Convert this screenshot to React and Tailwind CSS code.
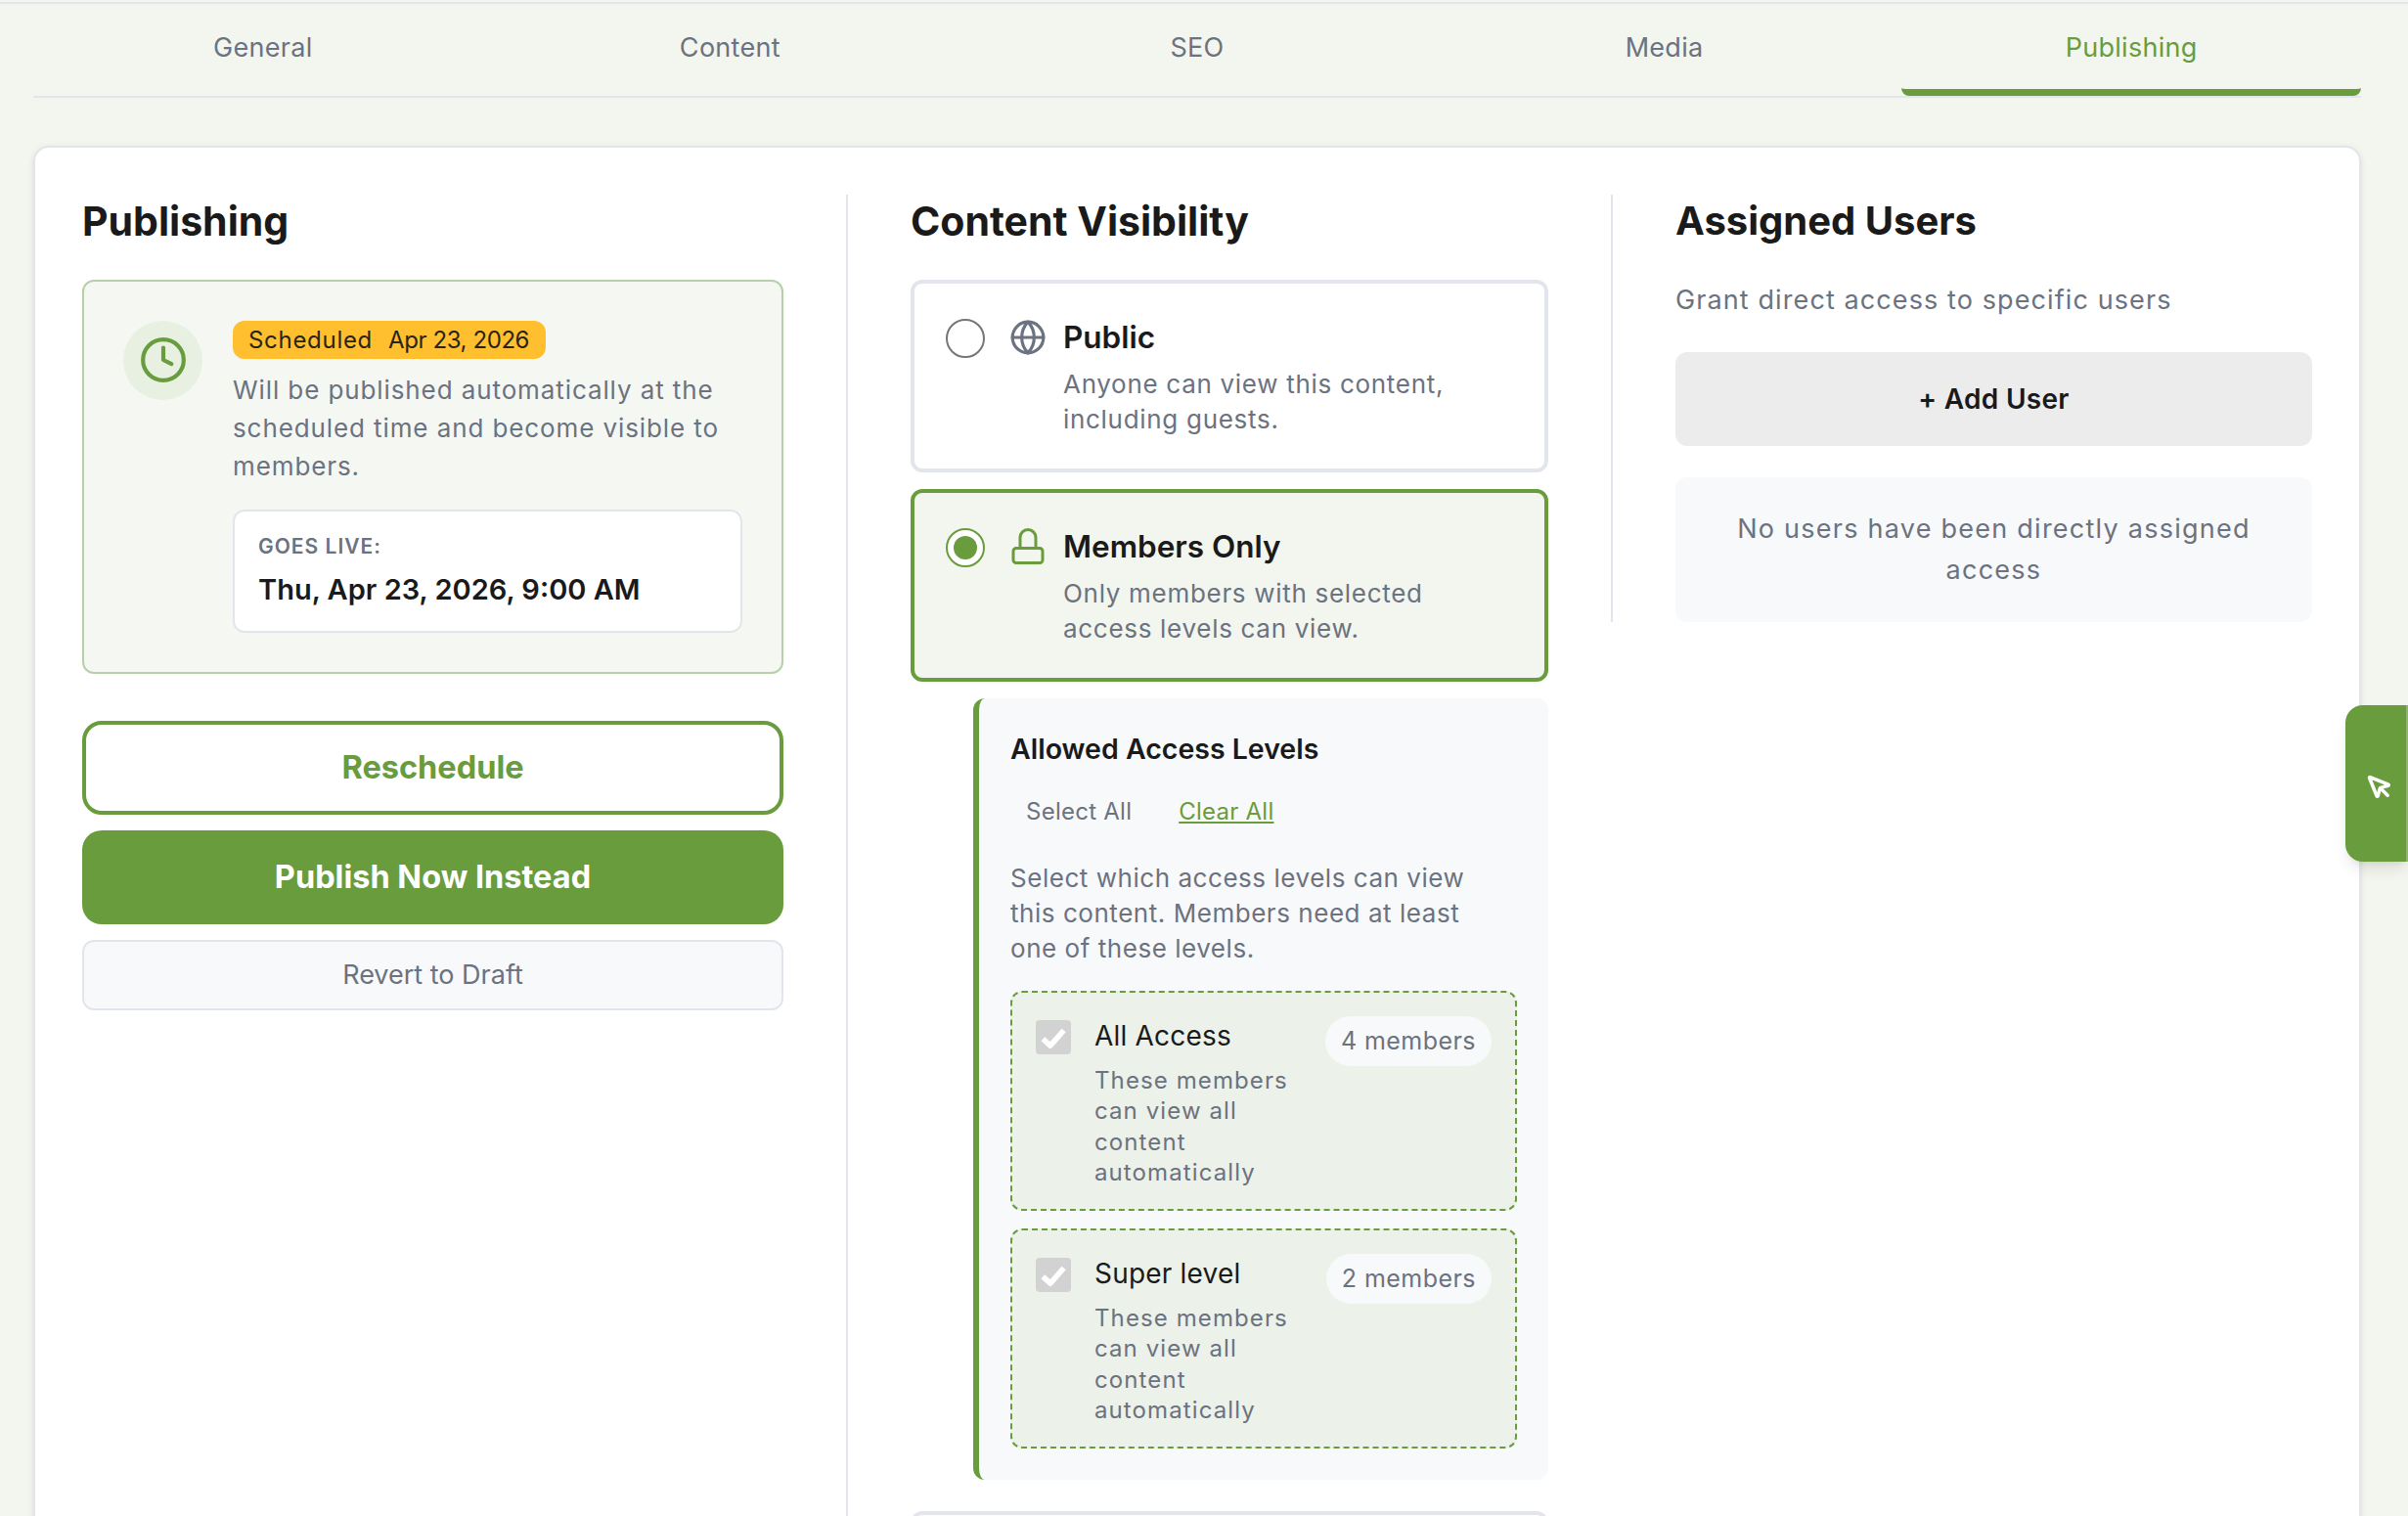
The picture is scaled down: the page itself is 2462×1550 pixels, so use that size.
import { Clock, Globe, MousePointer } from 'lucide-react'

const tabs = ['General', 'Content', 'SEO', 'Media', 'Publishing']

const levels = [
  { name: 'All Access', count: '4 members' },
  { name: 'Super level', count: '2 members' },
]

function LockIcon() {
  return (
    <svg viewBox="0 0 36 38" className="h-[38px] w-[36px]" fill="none" stroke="#699c3c" strokeWidth="3">
      <rect x="3" y="20.5" width="30" height="15" rx="3" />
      <path d="M10 20.5V9.5a8 8 0 0 1 16 0v11" />
    </svg>
  )
}

function LevelCard({ level }) {
  return (
    <div className="flex justify-between rounded-xl border-2 border-dashed border-[#699c3c] bg-[#ecf1e9] pl-[24px] pr-[24px] pt-[24px] pb-[22px]">
      <div className="flex gap-[24px]">
        <div className="mt-[4px] flex h-[35px] w-[36px] shrink-0 items-center justify-center rounded bg-[#d2d2d2]">
          <svg viewBox="0 0 24 24" className="h-[30px] w-[30px]" fill="none" stroke="#fff" strokeWidth="4.5" strokeLinejoin="round">
            <path d="M3.5 13l6 5.5L20.5 6" />
          </svg>
        </div>
        <div className="w-[215px]">
          <div className="mt-px text-[28px] leading-[38px] tracking-[0.2px] text-[#1a1a1a]">{level.name}</div>
          <p className="mt-[11px] text-[24px] leading-[31.3px] tracking-[1.1px] text-[#6b7280]">These members can view all content automatically</p>
        </div>
      </div>
      <div className="flex h-[51px] items-center rounded-full bg-[#f8f9fb] px-[16px] text-[25px] tracking-[0.45px] text-[#6b7280]">{level.count}</div>
    </div>
  )
}

function VisibilityOption({ selected, icon, title, children }) {
  return (
    <div className={`flex rounded-xl border-4 pl-[32px] pr-[32px] pt-[32px] pb-[32px] ${selected ? 'border-[#699c3c] bg-[#f3f6ee]' : 'border-[#e2e5eb] bg-white'}`}>
      {selected ? (
        <div className="mt-[4px] flex h-[40px] w-[40px] shrink-0 items-center justify-center rounded-full border-2 border-[#699c3c] bg-white">
          <div className="h-[24px] w-[24px] rounded-full bg-[#699c3c]" />
        </div>
      ) : (
        <div className="mt-[4px] h-[40px] w-[40px] shrink-0 rounded-full border-2 border-[#767676] bg-white" />
      )}
      <div className="ml-[25px] mt-[4px] flex w-[38px] shrink-0 justify-center">{icon}</div>
      <div className="ml-[17px]">
        <div className="mt-px text-[31.5px] font-semibold leading-[44px] text-[#1a1a1a]">{title}</div>
        <p className="mt-[8px] max-w-[440px] text-[26px] leading-[36px] tracking-[0.7px] text-[#6b7280]">{children}</p>
      </div>
    </div>
  )
}

export default function App() {
  return (
    <div className="relative h-[1550px] w-full overflow-hidden bg-[#f3f6ee] font-['Inter',sans-serif]">
      <div className="mt-[2px] h-[2px] bg-[#e2e5eb]" />

      <div className="ml-[34px] flex h-[96px] w-[2380px] gap-2 border-b-2 border-[#e2e5eb]">
        {tabs.map((tab) => (
          <div
            key={tab}
            className={`flex h-[94px] flex-1 items-center justify-center rounded-b-lg text-[27px] tracking-[0.3px] ${tab === 'Publishing' ? 'border-b-[7px] border-[#699c3c] pt-[3px] text-[#699c3c]' : 'pb-[4px] text-[#6b7280]'}`}
          >
            {tab}
          </div>
        ))}
      </div>

      <div className="ml-[34px] mt-[49px] w-[2380px] rounded-2xl border-2 border-[#e2e5eb] bg-white px-[48px] pt-[48px] shadow-[0_2px_6px_rgba(0,0,0,0.1)]">
        <div className="grid grid-cols-[781px_782px_1fr]">
          {/* publishing */}
          <div className="pr-[64px]">
            <h2 className="mb-[33px] text-[41px] font-bold leading-[54px] text-[#1a1a1a]">Publishing</h2>
            <div className="flex gap-[31px] rounded-xl border-2 border-[#b7d0a8] bg-[#f5f8f2] p-[40px]">
              <div className="flex h-[81px] w-[81px] shrink-0 items-center justify-center rounded-full bg-[#e8f0e2]">
                <Clock size={50} strokeWidth={2} className="mb-[2px] text-[#699c3c]" />
              </div>
              <div className="flex-1">
                <div className="flex h-[39px] w-[320px] items-center gap-[16px] rounded-xl bg-[#ffbf2e] px-[16px] text-[24px] text-[#2a2415]">
                  <span className="tracking-[0.7px]">Scheduled</span>
                  <span className="tracking-[-0.4px]">Apr 23, 2026</span>
                </div>
                <p className="mt-[12px] text-[26px] leading-[39px] tracking-[0.9px] text-[#6b7280]">
                  Will be published automatically at the scheduled time and become visible to members.
                </p>
                <div className="mt-[25px] h-[126px] rounded-xl border-2 border-[#e2e5eb] bg-white px-[24px] pt-[21px]">
                  <div className="text-[21px] font-semibold leading-[30px] tracking-[1px] text-[#6b7280]">GOES LIVE:</div>
                  <div className="mt-[8px] text-[29px] font-semibold leading-[42px] text-[#1a1a1a]">Thu, Apr 23, 2026, 9:00 AM</div>
                </div>
              </div>
            </div>
            <button className="mt-[48px] flex h-[96px] w-full items-center justify-center rounded-[20px] border-4 border-[#699c3c] bg-white text-[32.5px] font-bold text-[#699c3c]">
              Reschedule
            </button>
            <button className="mt-[16px] flex h-[96px] w-full items-center justify-center rounded-[20px] bg-[#699c3c] text-[32.5px] font-bold text-white">
              Publish Now Instead
            </button>
            <button className="mt-[16px] flex h-[72px] w-full items-center justify-center rounded-xl border-2 border-[#e2e5eb] bg-[#f8f9fb] text-[27px] text-[#6b7280]">
              Revert to Draft
            </button>
          </div>

          {/* content visibility */}
          <div className="border-l-2 border-[#e2e5eb] px-[64px]">
            <h2 className="mb-[33px] text-[41px] font-bold leading-[54px] text-[#1a1a1a]">Content Visibility</h2>
            <VisibilityOption title="Public" icon={<Globe size={38} strokeWidth={2} className="text-[#6b7280]" />}>
              Anyone can view this content, including guests.
            </VisibilityOption>
            <div className="mt-[17px]">
              <VisibilityOption selected title="Members Only" icon={<LockIcon />}>
                Only members with selected access levels can view.
              </VisibilityOption>
            </div>
            <div className="ml-[64px] mt-[17px] rounded-xl border-l-[6px] border-[#699c3c] bg-[#f8f9fb] px-[32px] pb-[32px] pt-[32px]">
              <h3 className="text-[28.5px] font-semibold leading-[40px] text-[#1a1a1a]">Allowed Access Levels</h3>
              <div className="mt-[26px] flex gap-[16px] text-[24px] leading-[36px] tracking-[0.25px]">
                <span className="px-[16px] text-[#6b7280]">Select All</span>
                <span className="px-[16px] text-[#699c3c] underline">Clear All</span>
              </div>
              <p className="mt-[32px] max-w-[490px] text-[26px] leading-[36px] tracking-[0.54px] text-[#6b7280]">
                Select which access levels can view this content. Members need at least one of these levels.
              </p>
              <div className="mt-[25px] flex flex-col gap-[18px]">
                {levels.map((level) => (
                  <LevelCard key={level.name} level={level} />
                ))}
              </div>
            </div>
            <div className="mt-[32px] h-[120px] rounded-xl border-4 border-[#e2e5eb] bg-white" />
          </div>

          {/* assigned users */}
          <div className="self-start border-l-2 border-[#e2e5eb] pl-[64px]">
            <h2 className="text-[40px] font-bold leading-[54px] text-[#1a1a1a]">Assigned Users</h2>
            <p className="mt-[34px] text-[27px] leading-[39px] tracking-[1.1px] text-[#6b7280]">Grant direct access to specific users</p>
            <button className="mt-[34px] flex h-[96px] w-full items-center justify-center rounded-xl bg-[#ececec] text-[28px] font-semibold tracking-[0.3px] text-[#1a1a1a]">
              + Add User
            </button>
            <div className="mt-[32px] rounded-xl bg-[#f8f9fb] px-[48px] py-[32px] text-center text-[27px] leading-[42px] tracking-[1.25px] text-[#6b7280]">
              No users have been directly assigned access
            </div>
          </div>
        </div>
      </div>

      <div className="absolute right-0 top-[721px] flex h-[160px] w-[64px] items-center justify-center rounded-l-[18px] border-r-2 border-[#8fb56d] bg-[#699c3c] shadow-lg">
        <MousePointer size={28} strokeWidth={3} className="ml-[8px] mt-[8px] text-white" />
      </div>
    </div>
  )
}
